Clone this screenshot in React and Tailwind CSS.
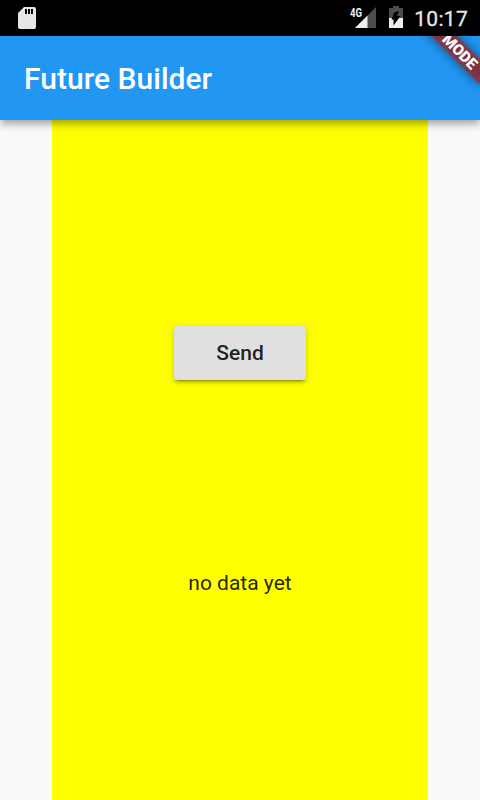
import React from "react";

function SdCard() {
  return (
    <svg className="mt-[7px] ml-[18px] h-[22px] w-[18px]" viewBox="0 0 18 22">
      <path
        fill="#e6e6e6"
        fillRule="evenodd"
        d="M6 0H16Q18 0 18 2V20Q18 22 16 22H2Q0 22 0 20V6ZM7 2V7H9V2ZM10 2V7H12V2ZM13 2V7H15V2Z"
      />
    </svg>
  );
}

function Signal() {
  return (
    <svg className="h-[36px] w-[30px]" viewBox="0 0 30 36">
      <path fill="#4d4d4d" d="M26 7V28H5Z" />
      <path fill="#f0f0f0" d="M17.5 15.5V28H5Z" />
      <text
        x="0"
        y="16.5"
        fill="#f0f0f0"
        fontFamily="Roboto, sans-serif"
        fontSize="12.5"
        fontWeight="700"
        textLength="12"
        lengthAdjust="spacingAndGlyphs"
      >
        4G
      </text>
    </svg>
  );
}

function Battery() {
  return (
    <svg className="ml-[9px] h-[36px] w-[14px]" viewBox="0 0 14 36">
      <path fill="#4d4d4d" d="M4 6H10V8H14V18H0V8H4Z" />
      <path fill="#f0f0f0" d="M0 18H14V28H0Z" />
      <path fill="#000" d="M10 11L8 16H11.5L4.5 25.5V19.5H2.5L5 12.5Z" />
    </svg>
  );
}

function StatusBar() {
  return (
    <header className="relative z-20 flex h-[36px] shrink-0 justify-between bg-black">
      <SdCard />
      <div className="flex pr-[12px]">
        <Signal />
        <Battery />
        <span className="ml-[11px] w-[54px] text-right text-[21px] leading-[38px] tracking-[0.3px] text-[#e6e6e6] [-webkit-text-stroke:0.3px_#e6e6e6]">10:17</span>
      </div>
    </header>
  );
}

function ModeBanner() {
  return (
    <div className="absolute top-[-9px] left-[384px] h-[18px] w-[120px] rotate-45">
      <div className="absolute inset-0 bg-black/50 blur-[6px]" />
      <div className="relative h-full bg-[#b71c1c]/63 pl-[61px] text-[15.3px] leading-[18px] font-black whitespace-nowrap text-white">
        MODE
      </div>
    </div>
  );
}

export default function App() {
  return (
    <div className="flex h-[800px] w-[480px] flex-col overflow-hidden bg-[#fafafa] font-[Roboto,sans-serif]">
      <StatusBar />
      <div className="relative z-10 flex h-[84px] shrink-0 items-center bg-[#2196f3] pl-[24px] shadow-[0_3px_6px_-1.5px_rgba(0,0,0,0.2),0_6px_7.5px_rgba(0,0,0,0.14),0_1.5px_15px_rgba(0,0,0,0.1)]">
        <h1 className="pt-[2px] text-[30px] leading-[36px] font-medium tracking-[0.02px] text-white">Future Builder</h1>
        <ModeBanner />
      </div>
      <main className="mx-auto flex w-[376px] flex-1 flex-col items-center bg-[#ffff00]">
        <button className="mt-[206px] h-[54px] w-[132px] rounded-[3px] bg-[#e0e0e0] pt-[2px] text-[21px] font-medium text-black/87 shadow-[0_4.5px_1.5px_-3px_rgba(0,0,0,0.2),0_3px_3px_rgba(0,0,0,0.14),0_1.5px_7.5px_rgba(0,0,0,0.12)]">
          Send
        </button>
        <p className="mt-[191px] text-[21px] leading-[25px] text-black/87">no data yet</p>
      </main>
    </div>
  );
}
